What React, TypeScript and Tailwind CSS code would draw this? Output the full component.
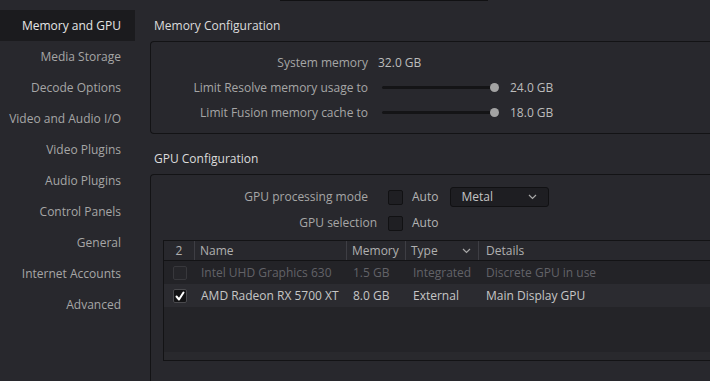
const navItems = [
  "Memory and GPU",
  "Media Storage",
  "Decode Options",
  "Video and Audio I/O",
  "Video Plugins",
  "Audio Plugins",
  "Control Panels",
  "General",
  "Internet Accounts",
  "Advanced",
];

function Check({ checked, dim }: { checked?: boolean; dim?: boolean }) {
  if (checked) {
    return (
      <div className="w-[14px] h-[14px] rounded-[2px] border border-[#4a4a4e] bg-[#131315] flex items-center justify-center">
        <svg width="12" height="12" viewBox="0 0 12 12" fill="none">
          <path
            d="M2.5 6.5 L5 9.5 L9.5 2.5"
            stroke="#ffffff"
            strokeWidth="2"
            strokeLinecap="round"
            strokeLinejoin="round"
          />
        </svg>
      </div>
    );
  }
  if (dim) {
    return (
      <div className="w-[14px] h-[14px] rounded-[2px] border border-[#38383c] bg-[#26262a]" />
    );
  }
  return (
    <div className="w-[15px] h-[15px] rounded-[2px] border border-[#111113] bg-[#1f1f23]" />
  );
}

function Chevron() {
  return (
    <svg width="9" height="6" viewBox="0 0 9 6" fill="none">
      <path d="M1 1 L4.5 4.5 L8 1" stroke="#a8a8a8" strokeWidth="1.2" />
    </svg>
  );
}

function Slider() {
  return (
    <div className="ml-[14px] flex items-center w-[117px]">
      <div className="w-[112px] h-[3px] rounded-full bg-[#141416]" />
      <div className="w-[9px] h-[9px] rounded-full bg-[#a3a3a3] -ml-[4px]" />
    </div>
  );
}

export default function App() {
  return (
    <div className="w-[710px] h-[381px] overflow-hidden flex bg-[#28282d] font-['Open_Sans',sans-serif] text-[12px] leading-[16px]">
      {/* sidebar */}
      <div className="w-[135px] shrink-0 pt-[10px]">
        {navItems.map((item, i) => (
          <div
            key={item}
            className={
              i === 0
                ? "h-[31px] flex items-center justify-end pr-[14px] bg-[#1b1b1e] text-[#e6e6e6]"
                : "h-[31px] flex items-center justify-end pr-[14px] text-[#a6a6a6]"
            }
          >
            {item}
          </div>
        ))}
      </div>

      {/* main */}
      <div className="flex-1 flex flex-col pl-[15px] min-w-0">
        <div className="h-px shrink-0 ml-[130px] w-[208px] bg-[#111113]" />
        <div className="h-[40px] shrink-0 pl-[4px] pt-[17px] text-[#dcdcdc]">
          Memory Configuration
        </div>

        <div className="h-[93px] shrink-0 border border-r-0 border-[#131315] rounded-l-[4px] pt-[8px] text-[#a6a6a6]">
          <div className="h-[25px] flex items-center">
            <div className="w-[217px] text-right">System memory</div>
            <div className="ml-[10px] text-[#bcbcbc]">32.0 GB</div>
          </div>
          <div className="h-[25px] flex items-center">
            <div className="w-[217px] text-right">Limit Resolve memory usage to</div>
            <Slider />
            <div className="ml-[11px] text-[#bcbcbc]">24.0 GB</div>
          </div>
          <div className="h-[25px] flex items-center">
            <div className="w-[217px] text-right">Limit Fusion memory cache to</div>
            <Slider />
            <div className="ml-[11px] text-[#bcbcbc]">18.0 GB</div>
          </div>
        </div>

        <div className="h-[40px] shrink-0 pl-[4px] pt-[17px] text-[#dcdcdc]">
          GPU Configuration
        </div>

        <div className="flex-1 border-t border-l border-[#131315] rounded-tl-[4px] pt-[10px] text-[#a6a6a6]">
          <div className="h-[24px] flex items-center">
            <div className="w-[226px] text-right pr-[9px]">GPU processing mode</div>
            <div className="ml-[11px]">
              <Check />
            </div>
            <div className="ml-[9px] text-[#b4b4b4]">Auto</div>
            <div className="ml-[12px] w-[99px] h-[20px] rounded-[3px] border border-[#111113] bg-[#1e1e22] flex items-center justify-between pl-[10px] pr-[11px] text-[#c4c4c4]">
              <span>Metal</span>
              <Chevron />
            </div>
          </div>
          <div className="mt-[2px] h-[24px] flex items-center">
            <div className="w-[226px] text-right">GPU selection</div>
            <div className="ml-[11px]">
              <Check />
            </div>
            <div className="ml-[9px] text-[#b4b4b4]">Auto</div>
          </div>

          {/* table */}
          <div className="mt-[5px] ml-[12px] border-t border-l border-b border-[#131315]">
            <div className="h-[20px] flex items-center border-b border-[#131315] text-[#b0b0b0]">
              <div className="w-[31px] h-full flex items-center justify-center border-r border-[#3e3e44]">
                2
              </div>
              <div className="w-[152px] h-full flex items-center pl-[5px] border-r border-[#3e3e44]">
                Name
              </div>
              <div className="w-[59px] h-full flex items-center pl-[5px] border-r border-[#3e3e44]">
                Memory
              </div>
              <div className="w-[73px] h-full flex items-center justify-between pl-[5px] pr-[7px] border-r border-[#3e3e44]">
                <span>Type</span>
                <Chevron />
              </div>
              <div className="flex-1 h-full flex items-center pl-[7px]">Details</div>
            </div>

            <div className="h-[23px] flex items-center bg-[#232327] text-[#626267]">
              <div className="w-[31px] flex justify-center pl-[1px]">
                <Check dim />
              </div>
              <div className="w-[152px] pl-[6px]">Intel UHD Graphics 630</div>
              <div className="w-[59px] pl-[6px]">1.5 GB</div>
              <div className="w-[73px] pl-[7px]">Integrated</div>
              <div className="flex-1 pl-[7px]">Discrete GPU in use</div>
            </div>
            <div className="h-[23px] flex items-center bg-[#2b2b30] text-[#c6c6c6]">
              <div className="w-[31px] flex justify-center pl-[1px]">
                <Check checked />
              </div>
              <div className="w-[152px] pl-[6px]">AMD Radeon RX 5700 XT</div>
              <div className="w-[59px] pl-[6px]">8.0 GB</div>
              <div className="w-[73px] pl-[7px]">External</div>
              <div className="flex-1 pl-[7px]">Main Display GPU</div>
            </div>
            <div className="h-[45px] bg-[#242428]" />
            <div className="h-[8px] bg-[#29292d]" />
          </div>
        </div>
      </div>
    </div>
  );
}
